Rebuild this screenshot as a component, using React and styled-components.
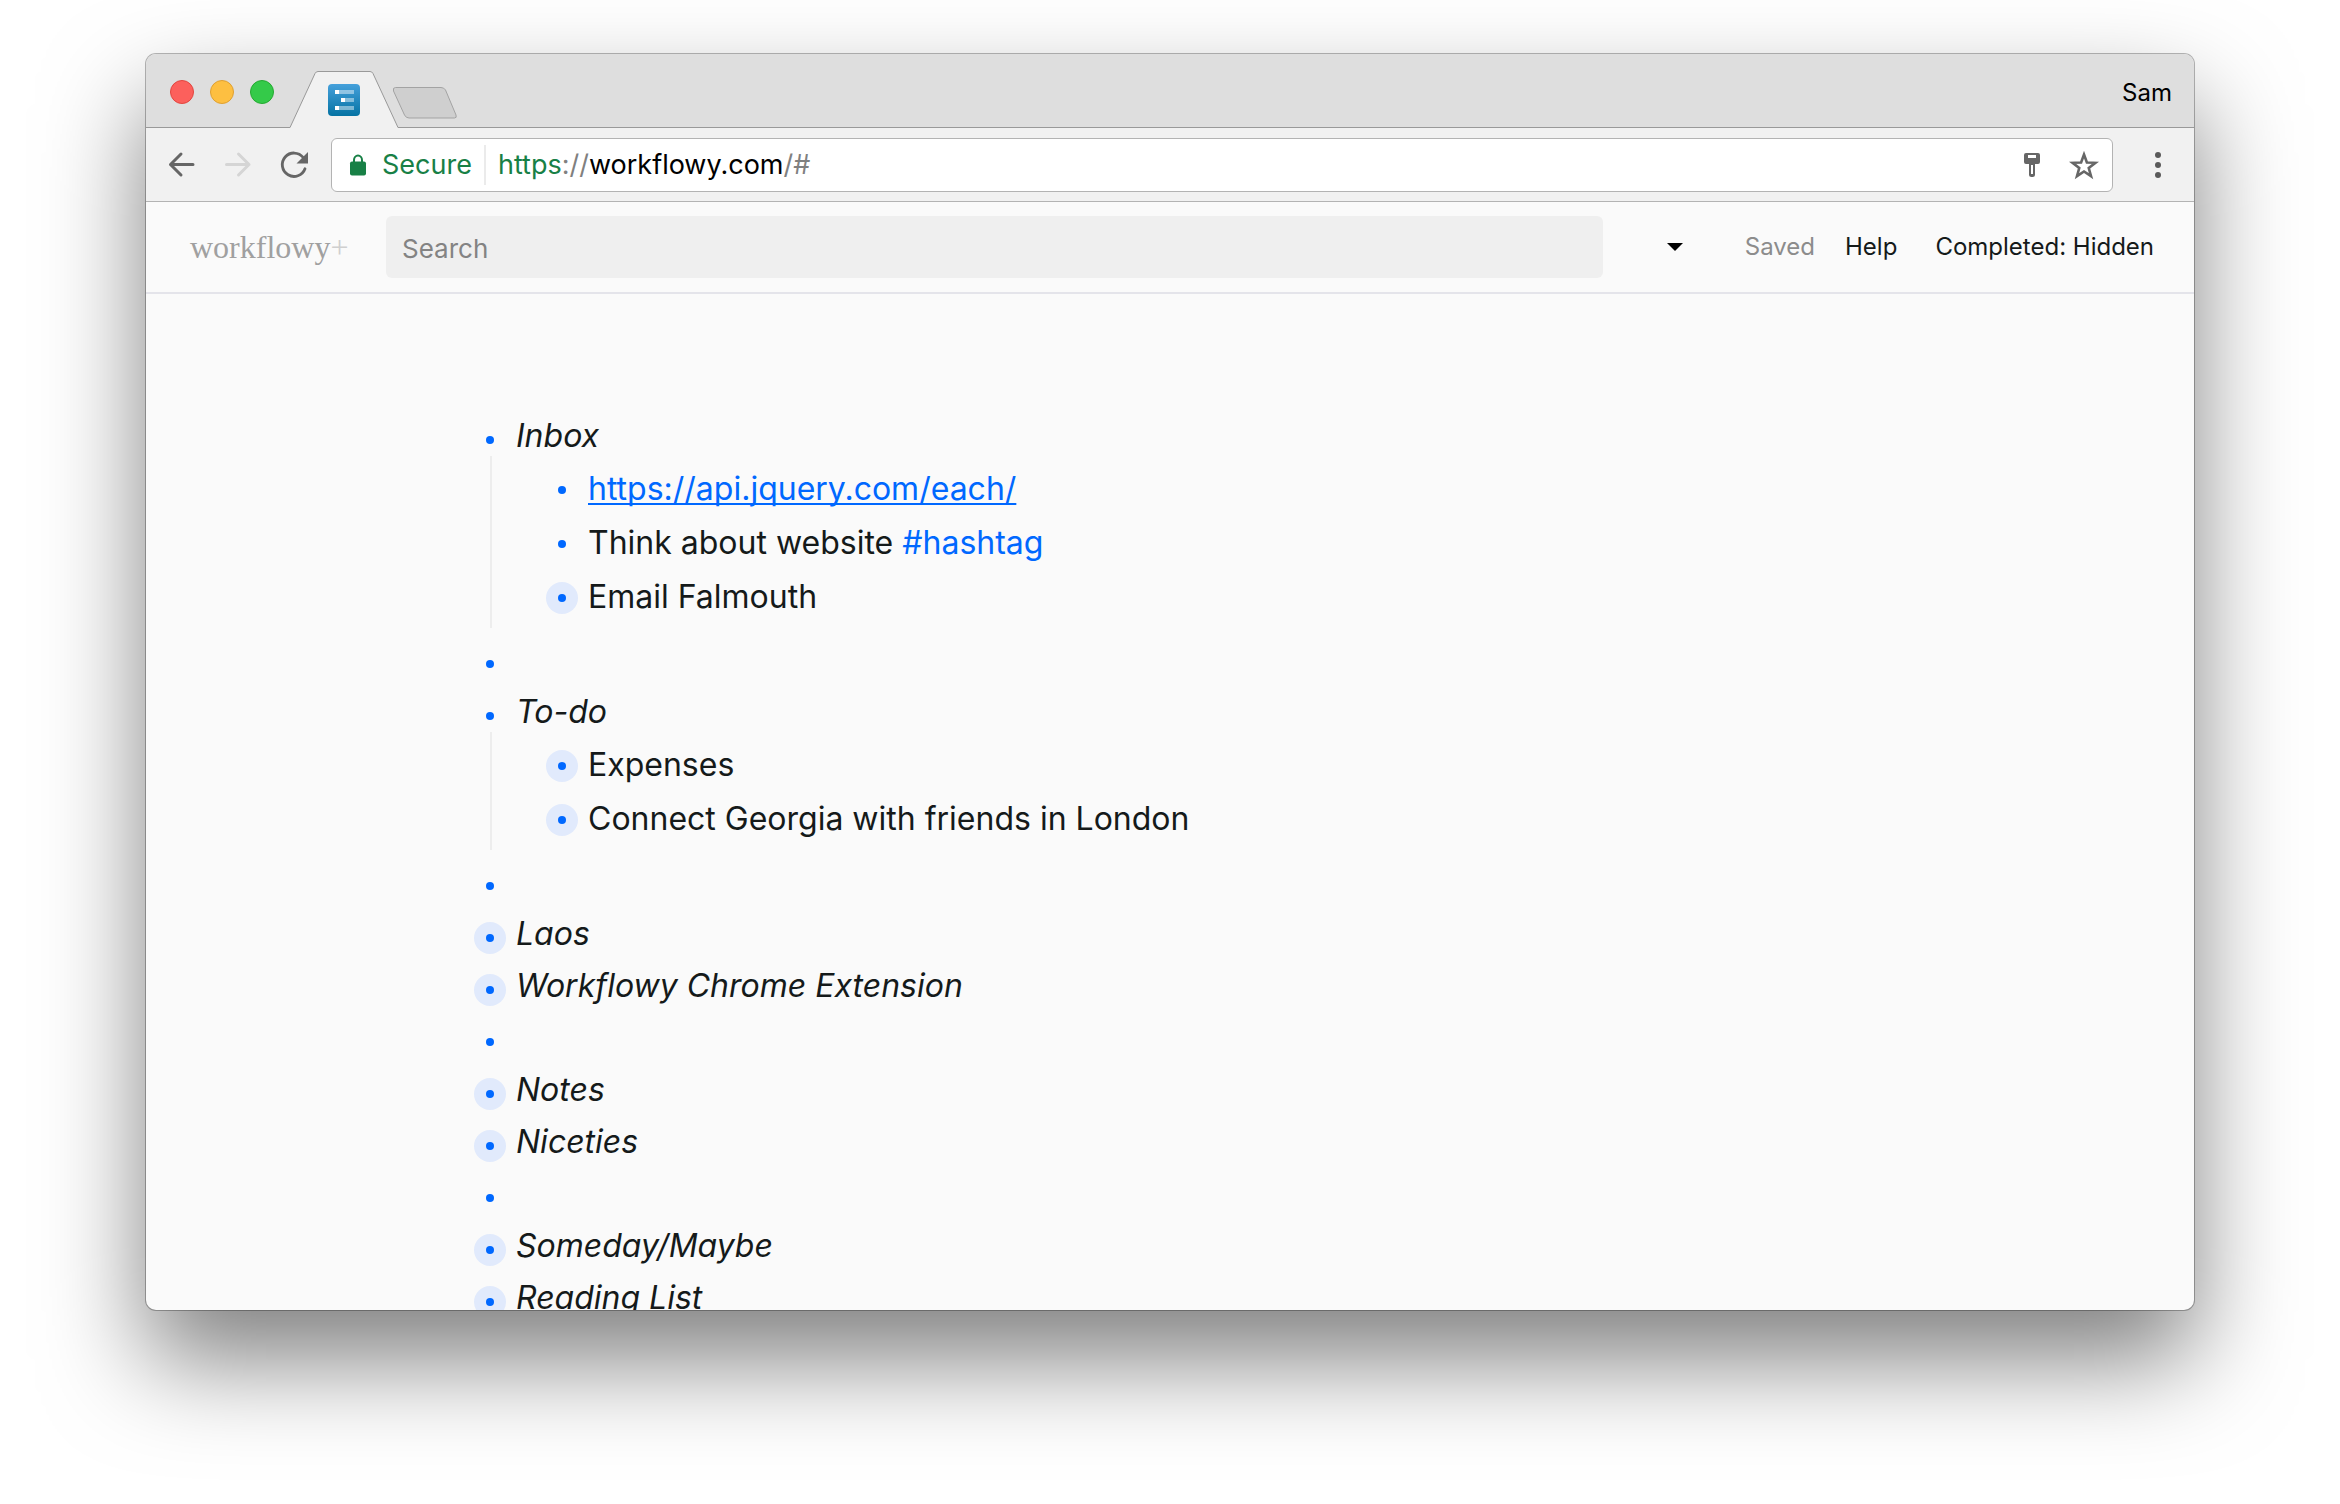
import React from "react";
import styled, { createGlobalStyle } from "styled-components";

const GlobalStyle = createGlobalStyle`
  * { box-sizing: border-box; }
  body {
    margin: 0;
    background: #fff;
    color: #151a1a;
    font-family: Inter, Roboto, "Liberation Sans", sans-serif;
  }
  button {
    display: flex;
    align-items: center;
    justify-content: center;
    padding: 0;
    border: 0;
    background: none;
    color: inherit;
    font: inherit;
    cursor: pointer;
  }
  svg { display: block; overflow: visible; }
`;

const Desktop = styled.div`
  display: flex;
  height: 100vh;
  padding: 54px 146px 194px;
`;

const Window = styled.main`
  display: flex;
  flex: 1;
  flex-direction: column;
  min-width: 0;
  overflow: hidden;
  border-radius: 10px;
  background: #fafafa;
  box-shadow: 0 0 0 1px rgba(0, 0, 0, 0.28), 0 50px 100px rgba(0, 0, 0, 0.5);
`;

const TabStrip = styled.div`
  display: flex;
  flex: none;
  align-items: center;
  height: 74px;
  padding: 3px 22px 0 24px;
  border-bottom: 1px solid #999;
  background: #dedede;
`;

const Lights = styled.div`
  display: flex;
  gap: 16px;
  margin-right: 16px;
`;

const Light = styled.button`
  width: 24px;
  height: 24px;
  border: 1px solid ${(p) => p.$edge};
  border-radius: 50%;
  background: ${(p) => p.$fill};
`;

const Tab = styled.button`
  align-self: flex-end;
  margin-bottom: -1px;
`;

const NewTab = styled.button`
  margin: 22px auto 0 -7px;
`;

const Profile = styled.button`
  color: #000;
  font-size: 24px;
  line-height: 32px;
  margin-top: 2px;
`;

const Toolbar = styled.div`
  display: flex;
  flex: none;
  align-items: center;
  gap: 28px;
  height: 74px;
  padding: 0 22px;
  border-bottom: 1px solid #b3b3b3;
  background: #f1f1f1;
`;

const IconButton = styled.button`
  width: 28px;
  height: 28px;
  color: ${(p) => (p.disabled ? "#d5d5d5" : "#666")};
`;

const Omnibox = styled.div`
  display: flex;
  flex: 1;
  align-items: center;
  height: 54px;
  margin: 0 3px 0 -5px;
  padding: 0 14px 0 18px;
  border: 1px solid #b3b3b3;
  border-radius: 6px;
  background: #fff;
  font-size: 27px;
  line-height: 40px;
`;

const Secure = styled.button`
  gap: 16px;
  padding-right: 12px;
  border-right: 2px solid #ebebeb;
  color: #188046;
`;

const Address = styled.div`
  flex: 1;
  padding-left: 12px;
  color: #808080;
  outline: none;
  white-space: nowrap;
`;

const Scheme = styled.span`
  color: #188046;
`;

const Host = styled.span`
  color: #000;
`;

const OmniActions = styled.div`
  display: flex;
  gap: 24px;
`;

const Header = styled.header`
  display: flex;
  flex: none;
  align-items: center;
  height: 92px;
  padding: 0 40px 0 44px;
  border-bottom: 2px solid #e4e4ea;
  font-size: 24px;
  line-height: 32px;
`;

const Logo = styled.a`
  width: 196px;
  color: #a0a0a0;
  font-family: "Liberation Serif", serif;
  font-size: 32px;
  line-height: 40px;
  text-decoration: none;
`;

const Plus = styled.span`
  color: #cfcfcf;
`;

const SearchBox = styled.input`
  flex: 1;
  min-width: 0;
  height: 62px;
  padding: 2px 16px 0;
  border: 0;
  border-radius: 6px;
  background: #efefef;
  color: #151a1a;
  font: inherit;
  font-size: 26px;
  outline: none;
  &::placeholder { color: #838383; opacity: 1; }
`;

const MenuCaret = styled.button`
  width: 32px;
  height: 32px;
  margin: 0 54px 0 56px;
`;

const Saved = styled.span`
  margin-right: 30px;
  color: #8c8c8c;
`;

const HeaderButton = styled.button`
  & + & { margin-left: 38px; }
`;

const Outline = styled.ul`
  width: 100%;
  max-width: 1392px;
  margin: 0 auto;
  padding: 115px 0 0;
  list-style: none;
  font-size: 32px;
`;

const Children = styled.ul`
  margin: -5px 0 5px 16px;
  padding: 5px 0 5px 54px;
  border-left: 2px solid #ededed;
  list-style: none;
`;

const Row = styled.div`
  display: flex;
  align-items: center;
  gap: 10px;
  height: ${(p) => (p.$nested ? 54 : 52)}px;
  font-style: ${(p) => (p.$nested ? "normal" : "italic")};
`;

const Bullet = styled.a`
  display: flex;
  flex: none;
  align-items: center;
  justify-content: center;
  width: 32px;
  height: 32px;
  margin-top: ${(p) => (p.$nested ? 4 : 10)}px;
  border-radius: 50%;
  background: ${(p) => (p.$collapsed ? "#e1eafc" : "transparent")};
  &::after {
    width: 8px;
    height: 8px;
    border-radius: 50%;
    background: #0068ff;
    content: "";
  }
`;

const Link = styled.a`
  color: #0068ff;
  text-decoration: underline;
  text-decoration-thickness: 2px;
  text-decoration-skip-ink: none;
  text-underline-offset: 3px;
`;

const Tag = styled.a`
  color: #0068ff;
  text-decoration: none;
`;

const items = [
  {
    text: "Inbox",
    children: [
      { text: <Link href="#each">https://api.jquery.com/each/</Link> },
      { text: <span>Think about website <Tag href="#hashtag">#hashtag</Tag></span> },
      { text: "Email Falmouth", collapsed: true },
    ],
  },
  { text: "" },
  {
    text: "To-do",
    children: [
      { text: "Expenses", collapsed: true },
      { text: "Connect Georgia with friends in London", collapsed: true },
    ],
  },
  { text: "" },
  { text: "Laos", collapsed: true },
  { text: "Workflowy Chrome Extension", collapsed: true },
  { text: "" },
  { text: "Notes", collapsed: true },
  { text: "Niceties", collapsed: true },
  { text: "" },
  { text: "Someday/Maybe", collapsed: true },
  { text: "Reading List", collapsed: true },
];

function Item({ item, nested = false }) {
  return (
    <li>
      <Row $nested={nested}>
        <Bullet href="#item" aria-label="Open item" $nested={nested} $collapsed={item.collapsed} />
        <span>{item.text}</span>
      </Row>
      {item.children && (
        <Children>
          {item.children.map((child, i) => <Item key={i} item={child} nested />)}
        </Children>
      )}
    </li>
  );
}

function TabShape() {
  return (
    <svg width="108" height="57" viewBox="0 0 108 57">
      <path d="M0 56.5 L25 2.5 Q26 .5 28 .5 H80 Q82 .5 83 2.5 L108 56.5 V57 H0Z" fill="#f1f1f1" />
      <path d="M0 56.5 L25 2.5 Q26 .5 28 .5 H80 Q82 .5 83 2.5 L108 56.5" fill="none" stroke="#999" />
      <defs>
        <linearGradient id="favicon" x1="0" y1="0" x2="0" y2="1">
          <stop offset="0" stopColor="#45a0db" />
          <stop offset="1" stopColor="#0573a3" />
        </linearGradient>
      </defs>
      <rect x="38" y="13" width="32" height="32" rx="4" fill="url(#favicon)" />
      <path d="M49 19h15v4H49zM55 27h9v4h-9zM49 35h15v4H49z" fill="#fff" opacity=".45" />
      <path d="M45 19h4v4h-4zM51 27h4v4h-4zM45 35h4v4h-4z" fill="#fff" />
    </svg>
  );
}

export default function App() {
  return (
    <Desktop>
      <GlobalStyle />
      <Window>
        <TabStrip>
          <Lights>
            <Light aria-label="Close" $fill="#fc605c" $edge="#e2463f" />
            <Light aria-label="Minimize" $fill="#fdbf41" $edge="#dfa032" />
            <Light aria-label="Zoom" $fill="#34ca49" $edge="#25a931" />
          </Lights>
          <Tab aria-label="WorkFlowy tab"><TabShape /></Tab>
          <NewTab aria-label="New tab">
            <svg width="68" height="32" viewBox="0 0 68 32">
              <path d="M4.500 .5 H50 Q53 .5 54.500 3 L65 28 Q66 31 63.500 31 H18 Q15 31 13.500 28 L2.500 4 Q1.500 .5 4.500 .5Z" fill="#cfcfcf" stroke="#a3a3a3" />
            </svg>
          </NewTab>
          <Profile>Sam</Profile>
        </TabStrip>

        <Toolbar>
          <IconButton aria-label="Back">
            <svg width="28" height="28" viewBox="0 0 28 28" fill="none" stroke="currentColor" strokeWidth="3" strokeLinecap="round" strokeLinejoin="round">
              <path d="M13 3 L2.500 13.500 L13 24 M2.500 13.500 H25" />
            </svg>
          </IconButton>
          <IconButton aria-label="Forward" disabled>
            <svg width="28" height="28" viewBox="0 0 28 28" fill="none" stroke="currentColor" strokeWidth="3" strokeLinecap="round" strokeLinejoin="round">
              <path d="M14.500 3 L25 13.500 L14.500 24 M25 13.500 H2.500" />
            </svg>
          </IconButton>
          <IconButton aria-label="Reload">
            <svg width="28" height="28" viewBox="0 0 28 28">
              <path d="M23.200 6.500 A11.700 11.700 0 1 0 25 17.700" fill="none" stroke="currentColor" strokeWidth="2.800" strokeLinecap="round" />
              <path d="M28 1 V12.500 H16.500Z" fill="currentColor" />
            </svg>
          </IconButton>
          <Omnibox>
            <Secure>
              <svg width="16" height="22" viewBox="0 0 16 22">
                <path d="M4 9 V6 A4 4.500 0 0 1 12 6 V9" fill="none" stroke="currentColor" strokeWidth="2" />
                <rect y="7.500" width="16" height="14" rx="2" fill="currentColor" />
              </svg>
              Secure
            </Secure>
            <Address role="textbox" aria-label="Address" tabIndex={0}>
              <Scheme>https</Scheme>://<Host>workflowy.com</Host>/#
            </Address>
            <OmniActions>
              <IconButton aria-label="Saved password">
                <svg width="28" height="28" viewBox="0 0 28 28">
                  <path
                    fillRule="evenodd"
                    fill="currentColor"
                    d="M8 2h12a2 2 0 0 1 2 2v7a2 2 0 0 1-2 2h-3v10.500a2.500 2.500 0 0 1-2.500 2.500h-1a2.500 2.500 0 0 1-2.500-2.500V13H8a2 2 0 0 1-2-2V4a2 2 0 0 1 2-2zM10 4v3h8V4zM13 14v9h2v-9z"
                  />
                </svg>
              </IconButton>
              <IconButton aria-label="Bookmark">
                <svg width="28" height="28" viewBox="0 0 28 28" fill="none" stroke="currentColor" strokeWidth="2.600">
                  <path d="M14 3.500 L16.900 11.500 L25.400 11.800 L18.750 17 L21.050 25.200 L14 20.500 L6.950 25.200 L9.250 17 L2.600 11.800 L11.100 11.500Z" />
                </svg>
              </IconButton>
            </OmniActions>
          </Omnibox>
          <IconButton aria-label="Menu">
            <svg width="28" height="28" viewBox="0 0 28 28" fill="#5a5a5a">
              <circle cx="14" cy="4" r="3" /><circle cx="14" cy="14" r="3" /><circle cx="14" cy="24" r="3" />
            </svg>
          </IconButton>
        </Toolbar>

        <Header>
          <Logo href="#home">workflowy<Plus>+</Plus></Logo>
          <SearchBox type="search" placeholder="Search" aria-label="Search" />
          <MenuCaret aria-label="More">
            <svg width="16" height="8" viewBox="0 0 16 8"><path d="M0 0H16L8 8Z" fill="#000" /></svg>
          </MenuCaret>
          <Saved>Saved</Saved>
          <HeaderButton>Help</HeaderButton>
          <HeaderButton>Completed: Hidden</HeaderButton>
        </Header>

        <Outline>
          {items.map((item, i) => <Item key={i} item={item} />)}
        </Outline>
      </Window>
    </Desktop>
  );
}
